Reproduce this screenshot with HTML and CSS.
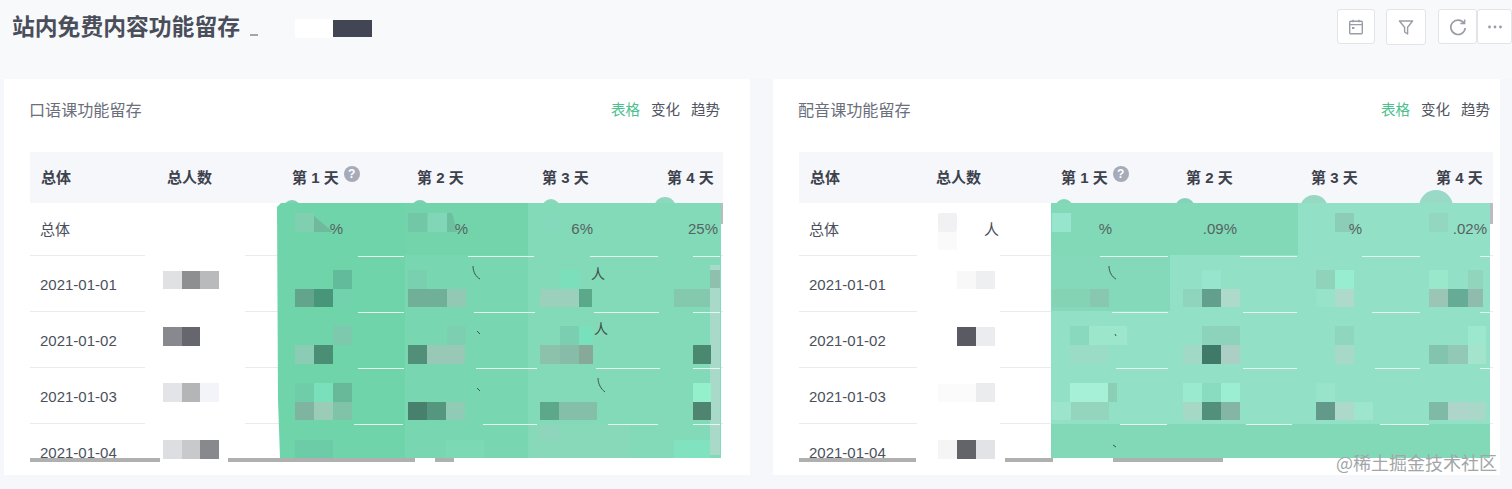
FILE: index.html
```html
<!DOCTYPE html>
<html lang="zh-CN">
<head>
<meta charset="utf-8">
<title>站内免费内容功能留存</title>
<link rel="stylesheet" href="styles.css">
</head>
<body>
<header class="top">
  <div class="title-wrap">
    <h1 class="title">站内免费内容功能留存</h1>
    <span class="scrub-dots"></span>
    <span class="scrub-white"></span>
    <span class="scrub-dark"></span>
  </div>
  <div class="tools">
    <button class="tool tool-cal"><svg width="16" height="16" viewBox="0 0 16 16" fill="none" stroke="#9a9ca8" stroke-width="1.4"><rect x="1.7" y="2.2" width="12.6" height="12.6" rx="1"/><path d="M1.7 5.6h12.6M5 .8v2.4M11 .8v2.4"/><rect x="4" y="8" width="2.4" height="2" fill="#9a9ca8" stroke="none"/></svg></button>
    <button class="tool tool-filter"><svg width="16" height="16" viewBox="0 0 16 16" fill="none" stroke="#9a9ca8" stroke-width="1.4" stroke-linejoin="round"><path d="M1.400 2h13.200L9.600 8.200V15L6.600 13V8.200z"/></svg></button>
    <button class="tool tool-refresh"><svg width="18" height="18" viewBox="0 0 18 18" fill="none" stroke="#9a9ca8" stroke-width="1.7"><path d="M15 5.200A7.200 7.200 0 1 0 16.200 10"/><path d="M15.600 1.400v4.200h-4.200" stroke-width="1.500"/></svg></button>
    <button class="tool tool-more"><svg width="16" height="4" viewBox="0 0 16 4" fill="#9a9ca8"><circle cx="2.500" cy="2" r="1.400"/><circle cx="8" cy="2" r="1.400"/><circle cx="13.500" cy="2" r="1.400"/></svg></button>
  </div>
</header>

<main class="cards">
  <section class="card card-left">
    <div class="card-head">
      <h2 class="card-title">口语课功能留存</h2>
      <div class="tabs"><span class="tab tab-on">表格</span><span class="tab">变化</span><span class="tab">趋势</span></div>
    </div>
    <div class="table">
      <svg class="cover" width="693" height="310" viewBox="30 152 693 310" aria-hidden="true">
        <rect x="145" y="252" width="100" height="210" fill="#fff"/>
        <g>
          <rect x="163" y="271" width="19" height="18" fill="#e0e1e2"/><rect x="182" y="271" width="18" height="18" fill="#8e8f91"/><rect x="200" y="271" width="19" height="18" fill="#b9babc"/>
          <rect x="163" y="327" width="19" height="19" fill="#88898e"/><rect x="182" y="327" width="18" height="19" fill="#66676e"/>
          <rect x="163" y="383" width="19" height="19" fill="#e3e4e7"/><rect x="182" y="383" width="18" height="19" fill="#b4b5b7"/><rect x="200" y="383" width="19" height="19" fill="#f2f4f9"/>
          <rect x="163" y="440" width="19" height="19" fill="#dddee1"/><rect x="182" y="440" width="18" height="19" fill="#c8c9cb"/><rect x="200" y="440" width="19" height="19" fill="#88898d"/>
        </g>
        <rect x="30" y="458" width="130" height="4" fill="#b0b0b0"/>
        <rect x="228" y="458" width="187" height="4" fill="#b0b0b0"/>
        <rect x="435" y="458" width="19" height="4" fill="#b0b0b0"/>
        <rect x="721" y="203" width="2" height="21" fill="#b9bcc0"/>
        <circle cx="292" cy="209" r="9" fill="#7fcfb0"/><circle cx="420" cy="208" r="8" fill="#7fcfb0"/><circle cx="551" cy="208" r="9" fill="#8ad8bb"/><circle cx="665" cy="208" r="11" fill="#8fd8bd"/>
        <path d="M281 203H721V458H280L278 400L277 207Z" fill="#70d4ab"/>
        <rect x="405" y="203" width="123" height="52" fill="#73d4ab"/>
        <rect x="405" y="255" width="123" height="203" fill="#78d7b1"/>
        <rect x="528" y="203" width="193" height="255" fill="#83dab9"/>
        <rect x="530" y="424" width="100" height="34" fill="#88d9ba"/>
        <rect x="710" y="265" width="10" height="190" fill="#a9d9c8"/>
        <g>
          <rect x="295" y="213" width="19" height="19" fill="#7fcfb0"/><path d="M314 216L333 232H314Z" fill="#70b99c"/>
          <rect x="408" y="213" width="19" height="19" fill="#72c7a7"/><rect x="428" y="213" width="19" height="19" fill="#80d6b6"/><path d="M447 213H452L457 232H447Z" fill="#6cbf9f"/>
          <rect x="540" y="213" width="19" height="19" fill="#85d9bb"/>
          <rect x="333" y="270" width="19" height="19" fill="#62bb9b"/><rect x="295" y="289" width="19" height="18" fill="#63a48c"/><rect x="314" y="289" width="19" height="18" fill="#479679"/><rect x="333" y="289" width="19" height="18" fill="#72d2ad"/>
          <rect x="408" y="270" width="19" height="19" fill="#79d0b0"/><rect x="408" y="289" width="39" height="18" fill="#70af98"/><rect x="447" y="289" width="19" height="18" fill="#92c9b4"/>
          <rect x="560" y="270" width="19" height="19" fill="#7bdfbb"/><rect x="540" y="289" width="39" height="18" fill="#9bd0bc"/><rect x="579" y="289" width="13" height="18" fill="#5aa98b"/>
          <rect x="674" y="289" width="36" height="18" fill="#84c9ae"/><rect x="710" y="270" width="10" height="18" fill="#8fc0ae"/>
          <rect x="333" y="326" width="19" height="19" fill="#7cc9ad"/><rect x="295" y="345" width="19" height="19" fill="#8accb4"/><rect x="314" y="345" width="19" height="19" fill="#4a8e75"/>
          <rect x="447" y="326" width="19" height="19" fill="#7ccfb0"/><rect x="408" y="345" width="19" height="19" fill="#528f79"/><rect x="427" y="345" width="38" height="19" fill="#97c9b6"/>
          <rect x="560" y="326" width="19" height="19" fill="#7bcfb0"/><rect x="579" y="326" width="14" height="19" fill="#79e0bc"/><rect x="540" y="345" width="20" height="19" fill="#8cc2ac"/><rect x="560" y="345" width="19" height="19" fill="#87bda8"/><rect x="579" y="345" width="14" height="19" fill="#86a99a"/>
          <rect x="693" y="345" width="18" height="19" fill="#4b8870"/>
          <rect x="295" y="383" width="19" height="19" fill="#70cda9"/><rect x="314" y="383" width="19" height="19" fill="#7ae0bb"/><rect x="333" y="383" width="19" height="19" fill="#68b99a"/>
          <rect x="295" y="402" width="19" height="18" fill="#7fb5a0"/><rect x="314" y="402" width="19" height="18" fill="#9accb8"/><rect x="333" y="402" width="19" height="18" fill="#7fc3a8"/>
          <rect x="408" y="402" width="19" height="18" fill="#47806c"/><rect x="427" y="402" width="19" height="18" fill="#55967f"/><rect x="446" y="402" width="19" height="18" fill="#90ccb5"/>
          <rect x="540" y="402" width="19" height="18" fill="#5da88b"/><rect x="559" y="402" width="38" height="18" fill="#84c0a9"/>
          <rect x="693" y="383" width="18" height="19" fill="#93f0cb"/><rect x="693" y="402" width="18" height="18" fill="#4f8570"/>
          <rect x="295" y="440" width="38" height="18" fill="#6ccca7"/><rect x="446" y="440" width="38" height="18" fill="#7bdab4"/><rect x="674" y="440" width="36" height="18" fill="#80e2bf"/><rect x="540" y="424" width="19" height="16" fill="#8ed5bb"/>
        </g>
        <g stroke="#e4f7ef" stroke-width="1">
          <path d="M358 256.500H404M468 256.500H534M590 256.500H658M693 256.500H720"/>
          <path d="M358 312.500H404M474 312.500H535M594 312.500H659M693 312.500H720"/>
          <path d="M358 368.500H404M476 368.500H537M596 368.500H660M693 368.500H720"/>
          <path d="M354 424.500H403M483 424.500H537M608 424.500H658M693 424.500H720"/>
        </g>
        <g fill="none" stroke="#3f5450" stroke-width="1">
          <path d="M473 266C473 272 476 277 480 279"/><path d="M477 331L480 334"/><path d="M477 388L480 391"/><path d="M598 378C598 384 601 389 605 392"/>
        </g>
        <text class="frag" x="591" y="279">人</text>
        <text class="frag" x="594" y="334">人</text>
      </svg>
      <div class="row head"><span class="cell">总体</span><span class="cell">总人数</span><span class="cell">第 1 天<i class="help">?</i></span><span class="cell">第 2 天</span><span class="cell">第 3 天</span><span class="cell">第 4 天</span></div>
      <div class="row row-total"><span class="cell">总体</span><span class="cell num"></span><span class="cell num">%</span><span class="cell num">%</span><span class="cell num">6%</span><span class="cell num">25%</span></div>
      <div class="row"><span class="cell">2021-01-01</span></div>
      <div class="row"><span class="cell">2021-01-02</span></div>
      <div class="row"><span class="cell">2021-01-03</span></div>
      <div class="row"><span class="cell">2021-01-04</span></div>
    </div>
  </section>

  <section class="card card-right">
    <div class="card-head">
      <h2 class="card-title">配音课功能留存</h2>
      <div class="tabs"><span class="tab tab-on">表格</span><span class="tab">变化</span><span class="tab">趋势</span></div>
    </div>
    <div class="table">
      <svg class="cover" width="694" height="310" viewBox="799 152 694 310" aria-hidden="true">
        <rect x="917" y="252" width="83" height="210" fill="#fff"/>
        <rect x="917" y="205" width="53" height="60" fill="#fff"/>
        <g>
          <rect x="938" y="213" width="19" height="19" rx="2" fill="#f1f1f3"/><rect x="938" y="232" width="19" height="18" fill="#fafafa"/>
          <rect x="957" y="271" width="19" height="18" fill="#f8f8f8"/><rect x="976" y="271" width="19" height="18" fill="#eeeff0"/>
          <rect x="957" y="327" width="19" height="19" fill="#5a5b62"/><rect x="976" y="327" width="19" height="19" fill="#ebecef"/>
          <rect x="938" y="384" width="38" height="18" fill="#fbfbfc"/><rect x="976" y="383" width="19" height="19" fill="#ebecee"/>
          <rect x="938" y="440" width="19" height="19" fill="#f5f5f6"/><rect x="957" y="440" width="19" height="19" fill="#636469"/><rect x="976" y="440" width="19" height="19" fill="#e2e3e7"/>
        </g>
        <rect x="799" y="458" width="117" height="4" fill="#b0b0b0"/>
        <rect x="1005" y="458" width="48" height="4" fill="#b0b0b0"/>
        <rect x="1113" y="458" width="110" height="4" fill="#b0b0b0"/>
        <rect x="1490" y="203" width="3" height="21" fill="#b9bcc0"/>
        <circle cx="1064" cy="208" r="9" fill="#85d5b8"/><circle cx="1185" cy="208" r="10" fill="#86d2b8"/><circle cx="1314" cy="209" r="14" fill="#97d8c3"/><circle cx="1436" cy="207" r="17" fill="#99d9c5"/>
        <rect x="1051" y="203" width="439" height="255" fill="#92e0c5"/>
        <rect x="1051" y="203" width="247" height="52" fill="#81d9b8"/>
        <rect x="1051" y="255" width="119" height="56" fill="#83d9b9"/>
        <rect x="1051" y="424" width="439" height="34" fill="#82d9b8"/>
        <g>
          <rect x="1052" y="213" width="19" height="19" fill="#97e5cc"/><rect x="1335" y="213" width="19" height="19" fill="#8ccdb7"/><rect x="1429" y="213" width="19" height="19" fill="#94d7c0"/>
          <rect x="1052" y="289" width="38" height="18" fill="#84d3b5"/><rect x="1090" y="289" width="19" height="18" fill="#89c8b0"/>
          <rect x="1202" y="270" width="19" height="19" fill="#97e5cc"/><rect x="1183" y="289" width="19" height="18" fill="#8fd5bd"/><rect x="1202" y="289" width="19" height="18" fill="#62a08d"/><rect x="1221" y="289" width="19" height="18" fill="#aedacb"/>
          <rect x="1316" y="270" width="19" height="19" fill="#8fd3bb"/><rect x="1335" y="270" width="19" height="19" fill="#97edcf"/><rect x="1316" y="289" width="19" height="18" fill="#97e3ca"/><rect x="1335" y="289" width="19" height="18" fill="#aedacb"/>
          <rect x="1429" y="270" width="19" height="19" fill="#9ae8cc"/><rect x="1468" y="270" width="15" height="19" fill="#90d5bc"/><rect x="1429" y="289" width="19" height="18" fill="#9bc5b5"/><rect x="1448" y="289" width="20" height="18" fill="#66ab95"/><rect x="1468" y="289" width="15" height="18" fill="#8fbcad"/>
          <rect x="1070" y="326" width="19" height="19" fill="#89d9be"/><rect x="1089" y="326" width="38" height="19" fill="#9ce6cc"/><rect x="1070" y="345" width="38" height="19" fill="#9bdcc6"/>
          <rect x="1202" y="326" width="38" height="19" fill="#8dd3bc"/><rect x="1183" y="345" width="19" height="19" fill="#a0dac6"/><rect x="1202" y="345" width="19" height="19" fill="#3f7a68"/><rect x="1221" y="345" width="19" height="19" fill="#abcfc4"/>
          <rect x="1335" y="326" width="19" height="19" fill="#8fd6bf"/><rect x="1335" y="345" width="19" height="19" fill="#a6d9c8"/>
          <rect x="1429" y="345" width="19" height="19" fill="#83c4ae"/><rect x="1448" y="345" width="20" height="19" fill="#91c9b6"/><rect x="1468" y="326" width="18" height="19" fill="#9ce8cf"/><rect x="1468" y="345" width="18" height="19" fill="#a4e3cc"/>
          <rect x="1070" y="383" width="38" height="19" fill="#a6f0d7"/><rect x="1108" y="383" width="9" height="19" fill="#8ccfb7"/><rect x="1052" y="402" width="19" height="18" fill="#9ce4cb"/><rect x="1071" y="402" width="38" height="18" fill="#94d5be"/>
          <rect x="1183" y="383" width="19" height="19" fill="#9aeacf"/><rect x="1202" y="383" width="19" height="19" fill="#89dcc0"/><rect x="1221" y="383" width="19" height="19" fill="#9ceed2"/>
          <rect x="1183" y="402" width="19" height="18" fill="#a6d8c6"/><rect x="1202" y="402" width="19" height="18" fill="#52907c"/><rect x="1221" y="402" width="19" height="18" fill="#84b5a5"/>
          <rect x="1316" y="383" width="19" height="19" fill="#97e4ca"/><rect x="1316" y="402" width="19" height="18" fill="#62998a"/><rect x="1335" y="402" width="19" height="18" fill="#add9ca"/><rect x="1354" y="402" width="19" height="18" fill="#9de6cd"/>
          <rect x="1429" y="402" width="19" height="18" fill="#7fbaa7"/><rect x="1448" y="402" width="20" height="18" fill="#add5c9"/><rect x="1468" y="402" width="18" height="18" fill="#a9d8c8"/>
        </g>
        <g stroke="#e4f7ef" stroke-width="1">
          <path d="M1100 256.500H1168M1240 256.500H1297M1362 256.500H1420M1480 256.500H1490"/>
          <path d="M1112 312.500H1168M1243 312.500H1297M1372 312.500H1420M1480 312.500H1490"/>
          <path d="M1116 368.500H1168M1243 368.500H1297M1375 368.500H1420M1480 368.500H1490"/>
          <path d="M1120 424.500H1167M1246 424.500H1292M1380 424.500H1429"/>
        </g>
        <g fill="none" stroke="#3f5450" stroke-width="1">
          <path d="M1109 266C1109 272 1112 277 1116 279"/><path d="M1115 334L1116 336"/><path d="M1113 445L1116 447"/>
        </g>
      </svg>
      <div class="row head"><span class="cell">总体</span><span class="cell">总人数</span><span class="cell">第 1 天<i class="help">?</i></span><span class="cell">第 2 天</span><span class="cell">第 3 天</span><span class="cell">第 4 天</span></div>
      <div class="row row-total"><span class="cell">总体</span><span class="cell num num-people">人</span><span class="cell num">%</span><span class="cell num">.09%</span><span class="cell num">%</span><span class="cell num">.02%</span></div>
      <div class="row"><span class="cell">2021-01-01</span></div>
      <div class="row"><span class="cell">2021-01-02</span></div>
      <div class="row"><span class="cell">2021-01-03</span></div>
      <div class="row"><span class="cell">2021-01-04</span></div>
    </div>
  </section>
</main>
<div class="watermark">@稀土掘金技术社区</div>
</body>
</html>
```
FILE: styles.css
```css
* { box-sizing: border-box; }
html, body { margin: 0; padding: 0; }
body {
  width: 1512px;
  height: 489px;
  overflow: hidden;
  position: relative;
  background: #f6f7fa;
  font-family: "Liberation Sans", "Noto Sans CJK SC", sans-serif;
  color: #4b505c;
}
.top {
  height: 79px;
  display: flex;
  justify-content: space-between;
  align-items: flex-start;
  background: #f8f9fb;
}
.title-wrap {
  display: flex;
  align-items: center;
  height: 54px;
  padding-left: 12px;
}
.title {
  margin: 0 0 1px;
  font-size: 22.800px;
  line-height: 30px;
  font-weight: 700;
  color: #494e5a;
}
.scrub-dots { width: 8px; height: 2px; margin: 15px 37px 0 10px; background: #6a6f7a; opacity: .6; }
.scrub-white { width: 38px; height: 19px; background: #fff; margin-top: 2px; }
.scrub-dark { width: 39px; height: 17px; margin: 2px 0 0 0; background: #414554; }
.tools { display: flex; padding-top: 9px; }
.tool {
  padding: 0;
  width: 38px;
  height: 35px;
  display: flex;
  align-items: center;
  justify-content: center;
  background: #fff;
  border: 1px solid #e2e4e9;
  border-radius: 3px;
}
.tool-cal { margin-right: 11px; }
.tool-filter { width: 40px; height: 36px; margin-right: 12px; }
.tool-refresh { width: 39px; }
.tool-more { width: 35px; }
.cards {
  display: grid;
  grid-template-columns: 746px 727px;
  gap: 23px;
  margin-left: 4px;
}
.card {
  height: 396px;
  background: #fff;
  padding-left: 26px;
}
.card-left { padding-right: 27px; }
.card-right { padding-right: 7px; }
.card-head {
  height: 73px;
  display: flex;
  justify-content: space-between;
  padding-top: 18px;
}
.card-title {
  margin: 1px 0 0 -1px;
  font-size: 16.100px;
  line-height: 24px;
  font-weight: 400;
  color: #6a6f7b;
}
.tabs { display: flex; gap: 11px; padding: 1px 3px 0 0; line-height: 24px; font-size: 14.500px; color: #4f5460; }
.tab-on { color: #4cc08e; }
.table {
  position: relative;
  height: 310px;
  overflow: hidden;
}
.cover { position: absolute; left: 0; top: 0; z-index: 1; }
.frag { font-size: 14px; fill: #3f4d4a; font-family: "Noto Sans CJK SC", sans-serif; }
.row {
  display: grid;
  grid-template-columns: 126px repeat(5, 125px);
  height: 56px;
  border-bottom: 1px solid #e9ebef;
  font-size: 15px;
}
.row:last-child { border-bottom: 0; }
.cell {
  position: relative;
  z-index: 2;
  display: flex;
  align-items: center;
  padding: 1px 0 0 10px;
  white-space: nowrap;
}
.head {
  height: 51px;
  border-bottom: 0;
  background: #f6f7fb;
  font-weight: 700;
  color: #3c414c;
}
.head .cell { padding: 0 0 3px 11px; }
.row-total { height: 53px; }
.row-total .cell { padding: 0 0 1px 10px; }
.row-total .num { justify-content: flex-end; padding: 0 63px 1px 0; color: #566361; }
.row-total .num-people { padding-right: 51px; color: #4b505c; }
.help {
  width: 16px;
  height: 16px;
  margin: -4px 0 0 5px;
  border-radius: 50%;
  background: #a6abb9;
  color: #fff;
  font-style: normal;
  font-size: 12px;
  line-height: 16px;
  text-align: center;
}
.watermark {
  position: absolute;
  left: 1336px;
  top: 451px;
  z-index: 3;
  font-size: 18px;
  line-height: 22px;
  color: #a3a6a8;
  white-space: nowrap;
  font-family: "Noto Sans CJK SC", sans-serif;
}
```
